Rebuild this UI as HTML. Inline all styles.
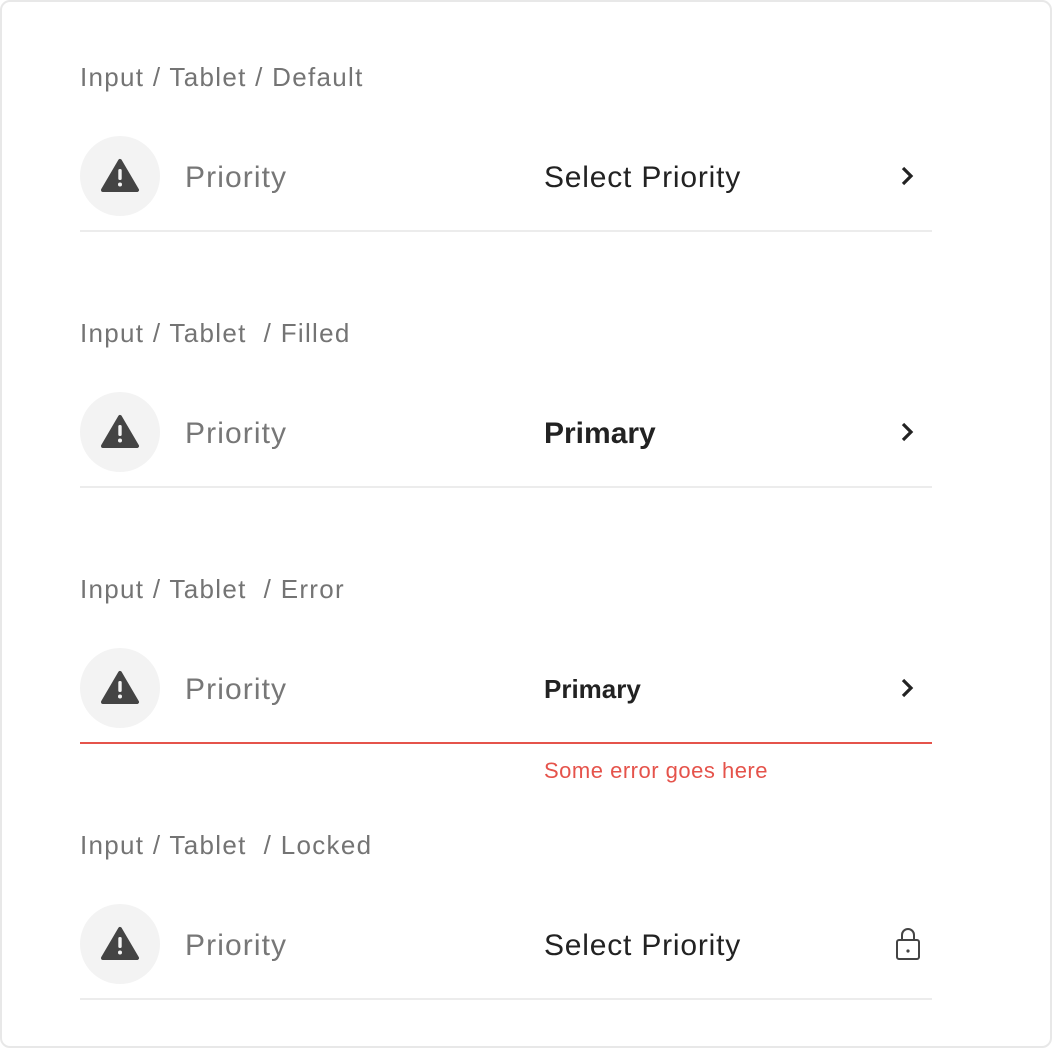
<!DOCTYPE html>
<html><head><style>
body{margin:0;width:1052px;height:1048px;background:#fff;font-family:"Liberation Sans",sans-serif;position:relative;overflow:hidden}
.frame{position:absolute;left:0;top:0;width:1048px;height:1044px;border:2px solid #e8e8e8;border-radius:10px}
.lbl{position:absolute;left:80px;font-size:26px;color:#747474;line-height:30px;letter-spacing:1.3px;top:0}
.circ{position:absolute;left:80px;width:80px;height:80px;border-radius:50%;background:#f3f3f3}
.circ svg{position:absolute;left:19px;top:20px}
.pri{position:absolute;left:185px;font-size:30px;color:#777;line-height:36px;letter-spacing:1.1px}
.val{position:absolute;left:544px;font-size:30px;color:#222;line-height:36px;letter-spacing:0.8px}
.line{position:absolute;left:80px;width:852px;height:2px;background:#ececec}
.chev{position:absolute;left:899px}
</style></head><body>
<div class="frame"></div>

<div class="lbl" style="top:62px">Input / Tablet / Default</div>
<div class="circ" style="top:136px"><svg width="42" height="40" viewBox="0 0 42 40"><path d="M21 5 L38 34 L4 34 Z" fill="#444" stroke="#444" stroke-width="4" stroke-linejoin="round"/><rect x="19.3" y="13" width="3.4" height="11" rx="1.5" fill="#f3f3f3"/><circle cx="21" cy="28.5" r="2" fill="#f3f3f3"/></svg></div>
<div class="pri" style="top:160px">Priority</div>
<div class="val" style="top:160px">Select Priority</div>
<svg class="chev" style="top:165px" width="18" height="22" viewBox="0 0 18 22"><path d="M4 3 L12 11 L4 19" fill="none" stroke="#222" stroke-width="3.2"/></svg>
<div class="line" style="top:230px"></div>

<div class="lbl" style="top:318px">Input / Tablet &nbsp;/ Filled</div>
<div class="circ" style="top:392px"><svg width="42" height="40" viewBox="0 0 42 40"><path d="M21 5 L38 34 L4 34 Z" fill="#444" stroke="#444" stroke-width="4" stroke-linejoin="round"/><rect x="19.3" y="13" width="3.4" height="11" rx="1.5" fill="#f3f3f3"/><circle cx="21" cy="28.5" r="2" fill="#f3f3f3"/></svg></div>
<div class="pri" style="top:416px">Priority</div>
<div class="val" style="top:416px;font-weight:bold;letter-spacing:0">Primary</div>
<svg class="chev" style="top:421px" width="18" height="22" viewBox="0 0 18 22"><path d="M4 3 L12 11 L4 19" fill="none" stroke="#222" stroke-width="3.2"/></svg>
<div class="line" style="top:486px"></div>

<div class="lbl" style="top:574px">Input / Tablet &nbsp;/ Error</div>
<div class="circ" style="top:648px"><svg width="42" height="40" viewBox="0 0 42 40"><path d="M21 5 L38 34 L4 34 Z" fill="#444" stroke="#444" stroke-width="4" stroke-linejoin="round"/><rect x="19.3" y="13" width="3.4" height="11" rx="1.5" fill="#f3f3f3"/><circle cx="21" cy="28.5" r="2" fill="#f3f3f3"/></svg></div>
<div class="pri" style="top:672px">Priority</div>
<div class="val" style="top:671px;font-weight:bold;font-size:26px;letter-spacing:0">Primary</div>
<svg class="chev" style="top:677px" width="18" height="22" viewBox="0 0 18 22"><path d="M4 3 L12 11 L4 19" fill="none" stroke="#222" stroke-width="3.2"/></svg>
<div class="line" style="top:742px;background:#e5534b"></div>
<div style="position:absolute;left:544px;top:757px;font-size:22px;color:#e5534b;line-height:28px;letter-spacing:0.5px">Some error goes here</div>

<div class="lbl" style="top:830px">Input / Tablet &nbsp;/ Locked</div>
<div class="circ" style="top:904px"><svg width="42" height="40" viewBox="0 0 42 40"><path d="M21 5 L38 34 L4 34 Z" fill="#444" stroke="#444" stroke-width="4" stroke-linejoin="round"/><rect x="19.3" y="13" width="3.4" height="11" rx="1.5" fill="#f3f3f3"/><circle cx="21" cy="28.5" r="2" fill="#f3f3f3"/></svg></div>
<div class="pri" style="top:928px">Priority</div>
<div class="val" style="top:928px">Select Priority</div>
<svg style="position:absolute;left:894px;top:926px" width="28" height="36" viewBox="0 0 28 36"><path d="M8 14 V9 A6 6 0 0 1 20 9 V14" fill="none" stroke="#444" stroke-width="2"/><rect x="3" y="14" width="22" height="19" rx="2" fill="none" stroke="#444" stroke-width="2"/><circle cx="14" cy="25" r="1.6" fill="#444"/></svg>
<div class="line" style="top:998px"></div>
</body></html>
